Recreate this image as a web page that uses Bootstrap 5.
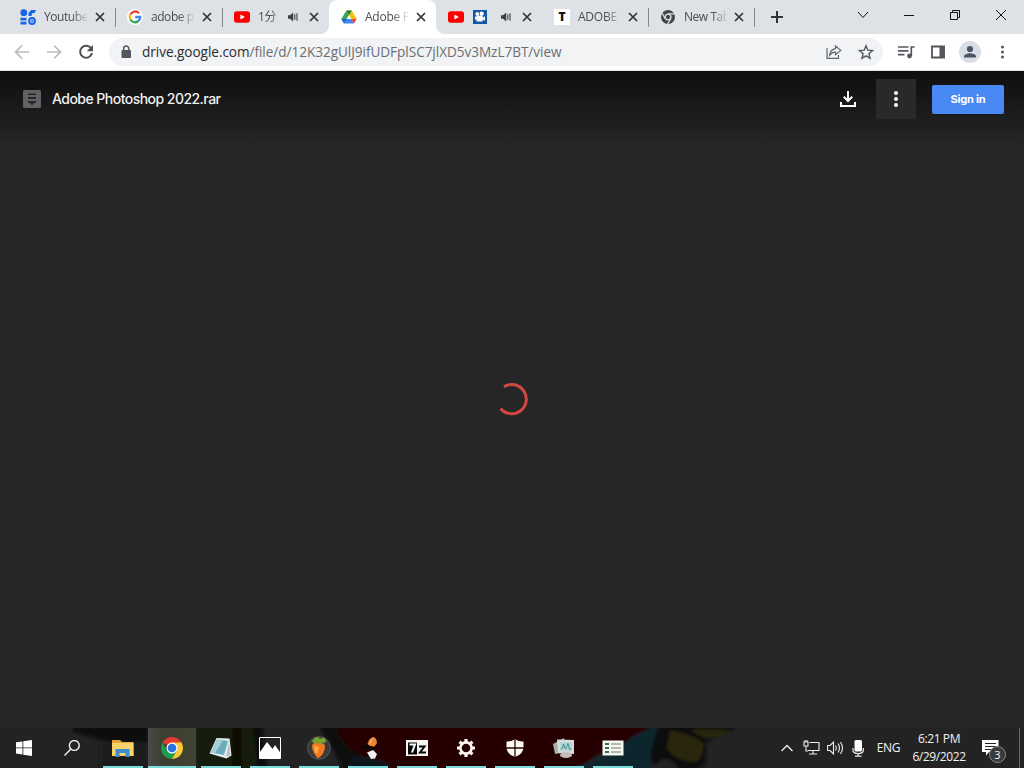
<!DOCTYPE html>
<html lang="en">

<head>
    <meta charset="UTF-8">
    <meta name="viewport" content="width=device-width, initial-scale=1">
    <title>Adobe Photoshop 2022.rar</title>
    <link href="https://cdn.jsdelivr.net/npm/bootstrap@5.3.3/dist/css/bootstrap.min.css" rel="stylesheet">
    <style>
        body { font-family: "Open Sans", "Noto Sans CJK SC", sans-serif; background: #262626; }
        svg { display: block; flex: none; }

        /* tabs */
        .tab-strip { height: 34px; background: #dee1e6; padding-left: 8px; color: #4a4d51; font-size: 12px; }
        .browser-tab { width: 107px; height: 34px; padding: 0 7px 0 12px; position: relative; flex: none; }
        .browser-tab.slim { width: 106px; }
        .browser-tab.sep::after { content: ""; position: absolute; right: -1px; top: 8px; width: 1px; height: 19px; background: #85898e; }
        .browser-tab.current { background: #fff; border-radius: 8px 8px 0 0; }
        .browser-tab.current::before,
        .browser-tab.current::after { content: ""; position: absolute; bottom: 0; width: 8px; height: 8px; }
        .browser-tab.current::before { left: -8px; background: radial-gradient(circle at 0 0, transparent 7.5px, #fff 8px); }
        .browser-tab.current::after { right: -8px; background: radial-gradient(circle at 100% 0, transparent 7.5px, #fff 8px); }
        .tab-title { width: 43px; margin-left: 8px; line-height: 18px; letter-spacing: -.25px; -webkit-mask-image: linear-gradient(to right, #000 65%, rgba(0, 0, 0, .1)); mask-image: linear-gradient(to right, #000 65%, rgba(0, 0, 0, .1)); }
        .tab-title.tight { letter-spacing: -.45px; }
        .tab-title.tiny { width: 19px; -webkit-mask-image: linear-gradient(to right, #000 60%, rgba(0, 0, 0, .5)); mask-image: linear-gradient(to right, #000 60%, rgba(0, 0, 0, .5)); }
        .after-speaker { margin-left: 5px; }
        .new-tab { margin-left: 15px; }
        .favicon-t { width: 16px; height: 16px; background: #fff; color: #111; font: 800 12px/16px "Open Sans", sans-serif; }

        /* toolbar */
        .toolbar { height: 37px; background: #fff; border-bottom: 1px solid #dfe3e3; padding: 0 10px; }
        .omnibox { height: 28px; width: 774px; margin-left: 11px; border-radius: 14px; background: #f1f3f4; padding: 0 9px; }
        .url { font-size: 13.6px; letter-spacing: -.05px; color: #6a6e73; margin-left: 8px; line-height: 20px; }
        .url b { font-weight: 400; color: #2b2d30; }
        .tools { margin-left: 14px; }
        .tools .panel-icon { margin-left: 15px; }
        .tools .profile { margin-left: 13px; }
        .tools .menu-dots { margin-left: 14px; }

        /* file viewer */
        .viewer { height: 657px; background: linear-gradient(#0e0e0e, #171717 28px, #262626 75px); }
        .viewer-bar { height: 56px; padding: 0 20px 0 23px; }
        .file-name { font: 500 14px/20px Inter, sans-serif; letter-spacing: -.53px; color: #f1f1f1; margin-left: 11px; }
        .more-box { width: 40px; height: 40px; background: #292929; margin-left: 19px; }
        .sign-in, .sign-in:hover { width: 72px; height: 29px; border-radius: 2px; background: #4889f4; color: #fff; font: 700 11px/29px Inter, sans-serif; letter-spacing: -.2px; padding: 0; border: 0; }
        .loader { height: 546px; }

        /* taskbar */
        .taskbar { height: 40px; background: #232323; position: relative; color: #f2f2f2; }
        .wallpaper { position: absolute; left: 0; top: 0; }
        .taskbar > div { position: relative; }
        .tb-cell, .app-cell { width: 48px; height: 40px; }
        .app-list { margin-left: 3px; gap: 1px; }
        .app-cell { position: relative; }
        .app-cell::after { content: ""; position: absolute; left: 4px; right: 4px; bottom: 0; height: 2px; background: #7ddbdc; }
        .app-cell.current { background: linear-gradient(to right, #484b48, #3c3f31 30%, #41432f); }
        .app-cell.current::after { left: 0; right: 0; }
        .tray { font-size: 12px; }
        .tray .network { margin-left: 10px; }
        .tray .volume { margin-left: 7px; }
        .tray .mic { margin-left: 8px; }
        .lang { margin-left: 13px; letter-spacing: -.4px; }
        .clock { width: 62px; margin-left: 8px; line-height: 18px; letter-spacing: -.4px; }
        .notes { margin-left: 12px; margin-right: 20px; }
        .note-count { position: absolute; left: 7px; top: 6px; width: 17px; height: 17px; border-radius: 50%; background: #3a3a3a; border: 1px solid #888; font-size: 11px; line-height: 15px; }
        .show-desktop { width: 5px; height: 40px; border-left: 1px solid #666; }
    </style>
</head>

<body class="overflow-hidden">
    <!-- shared icons -->
    <svg width="0" height="0" class="position-absolute">
        <symbol id="close" viewBox="0 0 16 16"><path d="M4 4l8 8M12 4l-8 8" stroke="#303236" stroke-width="1.7" /></symbol>
        <symbol id="youtube" viewBox="0 0 16 16"><rect y="2.2" width="16" height="11.6" rx="2.8" fill="#f00" /><path d="M6.4 5.4v5.2L10.9 8z" fill="#fff" /></symbol>
        <symbol id="speaker" viewBox="0 0 16 16"><path d="M3 6.2h2L8.2 3.5v9L5 9.8H3z" fill="#3c4043" /><path d="M9.800 5.300v5.400M12 4.200v7.600" fill="none" stroke="#3c4043" stroke-width="1.1" /></symbol>
    </svg>

    <!-- tab strip -->
    <div class="tab-strip d-flex align-items-center">
        <div class="browser-tab sep d-flex align-items-center">
            <svg width="16" height="16" viewBox="0 0 16 16" fill="#1766e8"><circle cx="3.8" cy="3.7" r="3.4" /><path d="M8.5 7V4L11 1h5l-1.2 2.8L12 4.5 11.5 7z" /><path d="M.5 8.8h6v2.7h-6zM.5 12.8h6v2.6h-6z" /><circle cx="12" cy="12" r="2.9" fill="none" stroke="#1766e8" stroke-width="2" /><path d="M11.4 10.5l2.400 1.500-2.400 1.500z" /></svg>
            <div class="tab-title tight text-nowrap">Youtube</div>
            <svg class="ms-auto" width="16" height="16"><use href="#close" /></svg>
        </div>
        <div class="browser-tab sep d-flex align-items-center">
            <svg width="16" height="16" viewBox="0 0 16 16"><circle cx="8" cy="8" r="8" fill="#fff" /><g fill="none" stroke-width="2.3"><path d="M12 4.2A5.2 5.2 0 0 0 3.4 5.6" stroke="#ea4335" /><path d="M3.4 5.6a5.2 5.2 0 0 0 0 4.8" stroke="#fbbc05" /><path d="M3.4 10.4a5.2 5.2 0 0 0 8 1.6" stroke="#34a853" /><path d="M11.4 12a5.2 5.2 0 0 0 1.8-4H8.2" stroke="#4285f4" /></g></svg>
            <div class="tab-title tight text-nowrap">adobe p</div>
            <svg class="ms-auto" width="16" height="16"><use href="#close" /></svg>
        </div>
        <div class="browser-tab d-flex align-items-center">
            <svg width="16" height="16"><use href="#youtube" /></svg>
            <div class="tab-title tiny text-nowrap">1分</div>
            <svg class="ms-auto" width="16" height="16"><use href="#speaker" /></svg>
            <svg class="after-speaker" width="16" height="16"><use href="#close" /></svg>
        </div>
        <div class="browser-tab current d-flex align-items-center">
            <svg width="16" height="16" viewBox="0 0 16 16"><path d="M5.3 1.5L.4 10l2.7 4.5L8 6.200z" fill="#34a853" /><path d="M5.300 1.500h5.400L15.600 10h-5.300z" fill="#fbbc04" /><path d="M5.300 1.500h5.400L8 6.200z" fill="#188038" /><path d="M3.1 14.5L5.7 10h4.6l2.6 4.5z" fill="#4285f4" /><path d="M.400 10h5.300l-2.600 4.500z" fill="#1967d2" /><path d="M15.6 10l-2.7 4.5-2.6-4.5z" fill="#ea4335" /><path d="M8 6.2L5.8 10h4.4z" fill="#fff" /></svg>
            <div class="tab-title text-nowrap">Adobe P</div>
            <svg class="ms-auto" width="16" height="16"><use href="#close" /></svg>
        </div>
        <div class="browser-tab slim d-flex align-items-center">
            <svg width="16" height="16"><use href="#youtube" /></svg>
            <svg class="ms-2" width="16" height="16" viewBox="0 0 16 16"><path d="M1 1h14v14H1z" fill="#1259a5" /><g fill="#fff"><circle cx="5.3" cy="4.9" r="1.9" /><circle cx="9.7" cy="4.7" r="2.1" /><path d="M4.500 6.500h6.200v2L13 7.200v4.600l-2.300-1.300v2H4.500V10L3 11V7.200l1.500.8z" /></g></svg>
            <svg class="ms-auto" width="16" height="16"><use href="#speaker" /></svg>
            <svg class="after-speaker" width="16" height="16"><use href="#close" /></svg>
        </div>
        <div class="browser-tab slim sep d-flex align-items-center">
            <div class="favicon-t text-center">T</div>
            <div class="tab-title text-nowrap">ADOBE</div>
            <svg class="ms-auto" width="16" height="16"><use href="#close" /></svg>
        </div>
        <div class="browser-tab slim sep d-flex align-items-center">
            <svg width="16" height="16" viewBox="0 0 16 16"><circle cx="8" cy="8" r="7" fill="#42464b" /><circle cx="8" cy="8" r="2.9" fill="#42464b" stroke="#dee1e6" stroke-width="1.4" /><path d="M8 4.8h6.5M5.2 9.6L2 4M10.8 9.6L7.5 15" stroke="#dee1e6" stroke-width="1.2" /></svg>
            <div class="tab-title tight text-nowrap">New Tab</div>
            <svg class="ms-auto" width="16" height="16"><use href="#close" /></svg>
        </div>
        <svg class="new-tab" width="16" height="16" viewBox="0 0 16 16"><path d="M8 2v12M2 8h12" stroke="#303236" stroke-width="2" /></svg>
        <!-- window controls -->
        <svg class="ms-auto mb-1" width="168" height="20" viewBox="0 0 168 20" fill="none" stroke="#111"><path d="M2 7l5 5.500L12 7" /><path d="M48 10.500h10M94.500 7.500h7v7h-7zM96.500 7.500v-2h7v7h-2M140 5l10 10M150 5l-10 10" /></svg>
    </div>

    <!-- toolbar -->
    <div class="toolbar d-flex align-items-center">
        <svg width="88" height="24" viewBox="0 0 88 24" fill="none"><path d="M19 12H6M12 5.500L5.500 12l6.500 6.500M37 12h13M44 5.500l6.500 6.500-6.500 6.500" stroke="#b8babd" stroke-width="1.700" /><path d="M81 8.200A6 6 0 1 0 82 13" stroke="#4d5156" stroke-width="2" /><path d="M83 5v6.300h-6.300z" fill="#4d5156" /></svg>
        <div class="omnibox d-flex align-items-center">
            <svg width="16" height="16" viewBox="0 0 16 16"><rect x="3.500" y="6" width="9.500" height="8" rx="1" fill="#54575c" /><path d="M5.700 6.500V4.600a2.500 2.500 0 0 1 5 0v1.900" fill="none" stroke="#54575c" stroke-width="1.500" /></svg>
            <div class="url text-nowrap"><b>drive.google.com</b>/file/d/12K32gUlJ9ifUDFplSC7jlXD5v3MzL7BT/view</div>
            <svg class="ms-auto" width="16" height="16" viewBox="0 0 16 16" fill="none" stroke="#63666b" stroke-width="1.200"><path d="M1 4v10.400h11.500V11" /><path d="M9.500 2l5.300 4.400-5.300 4.200V8.200Q6 8 3.500 11.300 4.200 5.500 9.500 4.700z" /></svg>
            <svg class="ms-3" width="16" height="16" viewBox="0 0 16 16" fill="none" stroke="#54575c" stroke-width="1.400"><path d="M8 1.800l1.800 4.400 4.700.4-3.600 3.100 1.100 4.600L8 11.800l-4 2.500 1.100-4.600-3.600-3.100 4.700-.4z" /></svg>
        </div>
        <div class="tools d-flex align-items-center">
            <svg width="18" height="16" viewBox="0 0 18 16" fill="none" stroke="#54575c" stroke-width="1.700"><path d="M1 3h10.500M1 6.800h10.500M1 10.600h6.500M17.500 3h-3.200v9" /><circle cx="12.500" cy="12" r="2.400" fill="#54575c" stroke="none" /></svg>
            <svg class="panel-icon" width="16" height="16" viewBox="0 0 16 16"><path d="M2 2.500h12v11H2z" fill="none" stroke="#54575c" stroke-width="1.800" /><path d="M9.500 2h5v12h-5z" fill="#54575c" /></svg>
            <svg class="profile" width="22" height="22" viewBox="0 0 22 22"><circle cx="11" cy="11" r="11" fill="#d9dee5" /><circle cx="11" cy="8" r="3.100" fill="#4b5566" /><path d="M5 16.500v-1.300c0-2 4-3 6-3s6 1 6 3v1.300z" fill="#4b5566" /></svg>
            <svg class="menu-dots" width="16" height="16" viewBox="0 0 16 16" fill="#54575c"><circle cx="7.500" cy="3" r="1.500" /><circle cx="7.500" cy="8" r="1.500" /><circle cx="7.500" cy="13" r="1.500" /></svg>
        </div>
    </div>

    <!-- file viewer -->
    <main class="viewer">
        <div class="viewer-bar d-flex align-items-center">
            <svg width="18" height="18" viewBox="0 0 18 18"><rect width="18" height="18" rx="1.500" fill="#616266" /><path d="M5 3.500h8v1.500H5zM5 7h8v2H5zM5 11h8v1.500l-2.500 1L9 15.500l-1.500-2-2.500-1z" fill="#28282a" /></svg>
            <div class="file-name text-nowrap">Adobe Photoshop 2022.rar</div>
            <svg class="ms-auto" width="18" height="18" viewBox="0 0 18 18" fill="none" stroke="#fff" stroke-width="2"><path d="M9 1v9.500M4.800 6.800L9 11l4.200-4.200M2 12v4h14v-4" /></svg>
            <div class="more-box d-flex align-items-center justify-content-center">
                <svg width="16" height="18" viewBox="0 0 16 18" fill="#fff"><circle cx="8" cy="3" r="2" /><circle cx="8" cy="9" r="2" /><circle cx="8" cy="15" r="2" /></svg>
            </div>
            <button class="sign-in btn ms-3">Sign in</button>
        </div>
        <div class="loader d-flex align-items-center justify-content-center">
            <svg width="32" height="34" viewBox="0 0 32 34"><path d="M8 3.700A14.600 14.600 0 1 1 4.500 25.500" fill="none" stroke="#d14841" stroke-width="3" /></svg>
        </div>
    </main>

    <!-- taskbar -->
    <footer class="taskbar d-flex align-items-center">
        <!-- desktop picture showing through -->
        <svg class="wallpaper" width="1024" height="40" viewBox="0 0 1024 40">
            <defs><filter id="soft" x="0" y="0" width="1" height="1"><feGaussianBlur stdDeviation="1.8" /></filter></defs>
            <g filter="url(#soft)">
                <path d="M72 -4h76v20q-30 1-50-5T72 3z" fill="#080808" />
                <path d="M100 14h48v30h-48z" fill="#1a1a1a" />
                <path d="M196 -4h58l8 48h-66z" fill="#151b07" />
                <path d="M232 -4h10v48h-10z" fill="#0b0f05" />
                <path d="M252 -4h10l6 48h-10z" fill="#101010" />
                <path d="M326 -4h326q-10 14-38 22-22 10-40 26H345z" fill="#260604" />
                <path d="M318 -4h18q4 22 24 30l24 18h-40l-10-22z" fill="#0b0b0b" />
                <path d="M346 44l6-16q20 0 36 8l6 8z" fill="#08191e" />
                <path d="M574 44l4-6q32-10 50-26 12-8 28-14l6 16q-6 12-16 30z" fill="#0b252d" />
                <path d="M660 -4h76q-4 10-20 13-6 4-10 4v22l-10 9h-32l-14-12q2-20 10-36z" fill="#0f0f0c" />
                <path d="M670 3q20 2 34 13-2 16-10 18-20-2-27-14z" fill="#2c270b" />
                <path d="M690 2h42q-12 9-28 8z" fill="#28260f" />
                <path d="M654 44q2-12 12-13 8 1 14 13z" fill="#242424" />
            </g>
        </svg>
        <div class="d-flex">
            <div class="tb-cell d-flex align-items-center justify-content-center">
                <svg width="16" height="16" viewBox="0 0 16 16" fill="#fff"><path d="M0 2.300l6.500-.9v6.100H0zM7.300 1.300L16 0v7.500H7.300zM0 8.300h6.500v6.200L0 13.600zM7.300 8.300H16V16l-8.700-1.300z" /></svg>
            </div>
            <div class="tb-cell d-flex align-items-center justify-content-center">
                <svg width="16" height="16" viewBox="0 0 16 16" fill="none" stroke="#f4f4f4" stroke-width="1.400"><circle cx="10.300" cy="5.500" r="4.900" /><path d="M6.800 9L.5 15.500" /></svg>
            </div>
        </div>
        <div class="app-list d-flex">
            <div class="app-cell d-flex align-items-center justify-content-center">
                <svg width="22" height="20" viewBox="0 0 22 20"><path d="M0 2h8l2 2h11.500v14H0z" fill="#e2a93a" /><path d="M0 5h21.500v13H0z" fill="#fbd368" /><path d="M3.500 19v-8h14v8h-4v-4h-6v4z" fill="#3e8ecb" /></svg>
            </div>
            <div class="app-cell current d-flex align-items-center justify-content-center">
                <svg width="24" height="24" viewBox="0 0 24 24"><path d="M12 12L2.480 6.500A11 11 0 0 1 21.520 6.500z" fill="#e33b2e" /><path d="M12 12V6.500h9.520A11 11 0 0 1 12 23z" fill="#fcc934" /><path d="M2.480 6.500A11 11 0 0 0 12 23l4.800-8.300L12 12 7.240 14.700z" fill="#1e9b4d" /><circle cx="12" cy="12" r="5.500" fill="#fff" /><circle cx="12" cy="12" r="4.300" fill="#2673e8" /></svg>
            </div>
            <div class="app-cell d-flex align-items-center justify-content-center">
                <svg width="24" height="24" viewBox="0 0 24 24"><path d="M7.500 2l13 .500 2 17-5 3L.500 17.500z" fill="#e2ebec" /><path d="M8 3.500L19 5l-4 14L2 16.500z" fill="#6bacba" /><path d="M8 3.500l6 1L6 17.300l-4-.800z" fill="#a3d0d6" /><path d="M20 6l1 13-3.500 2z" fill="#b5b9bb" /></svg>
            </div>
            <div class="app-cell d-flex align-items-center justify-content-center">
                <svg width="22" height="22" viewBox="0 0 22 22"><path d="M.5.500h21v21H.5z" fill="none" stroke="#fff" /><path d="M1 15L8 5l5.500 7L16 8l5.500 8v5.500H1z" fill="#fff" /></svg>
            </div>
            <div class="app-cell d-flex align-items-center justify-content-center">
                <svg width="24" height="24" viewBox="0 0 24 24"><circle cx="12" cy="12" r="11.300" fill="#383a3b" stroke="#555b5d" /><path d="M5 10q0-3.500 6-3.500 7.500 0 7 4.500-1 8-7 11.500Q5.500 17 5 10z" fill="#f47722" /><path d="M7.500 10l4.500 1-2 7q-3.500-4-2.500-8z" fill="#ffb13c" /><path d="M5 5.500Q7 1 11 1l2 2 4-1.500q3 2 1 5.500l-3-.5-2 2.500-2-3-3 2z" fill="#77a530" /></svg>
            </div>
            <div class="app-cell d-flex align-items-center justify-content-center">
                <svg width="30" height="24" viewBox="0 0 30 24"><path d="M14.500 8Q16 2 20.500 1q3 1 3.500 6l-2.500 3.500-4.500-.5z" fill="#e98737" /><path d="M20 2.500q-2.500 2-3 5" stroke="#ffc27f" fill="none" /><path d="M8 11h7l5 3" stroke="#080808" stroke-width="2.500" fill="none" /><path d="M14 16.500l6-2.500 4 4-2 4.500-4 .5z" fill="#f1eeee" /></svg>
            </div>
            <div class="app-cell d-flex align-items-center justify-content-center">
                <svg width="22" height="16" viewBox="0 0 22 16"><path d="M0 0h22v16H0z" fill="#f6f6f0" /><path d="M2 2.500h9v12H2z" fill="#080808" /><path d="M3.500 4.500h5.500L6 12.500" fill="none" stroke="#fff" stroke-width="2" /><path d="M13 6.500h5.500l-4.500 6h6" fill="none" stroke="#080808" stroke-width="2" /></svg>
            </div>
            <div class="app-cell d-flex align-items-center justify-content-center">
                <svg width="20" height="20" viewBox="0 0 20 20" fill="none" stroke="#fff5f2"><circle cx="10" cy="10" r="5.600" stroke-width="2.600" /><path d="M10 1v3M10 16v3M1 10h3M16 10h3M3.600 3.600l2.200 2.200M14.200 14.200l2.200 2.200M16.400 3.600l-2.200 2.200M5.800 14.200l-2.200 2.200" stroke-width="3.200" /></svg>
            </div>
            <div class="app-cell d-flex align-items-center justify-content-center">
                <svg width="18" height="18" viewBox="0 0 18 18"><path d="M9 0q4 3 8.500 2.500V8q0 7-8.500 10Q.5 15 .5 8V2.500Q5 3 9 0z" fill="#fffdf4" /><path d="M9 0v18M0 9h18" stroke="#260604" stroke-width="1.300" /></svg>
            </div>
            <div class="app-cell d-flex align-items-center justify-content-center">
                <svg width="24" height="22" viewBox="0 0 24 22"><path d="M1 7l11-6 3 14-12 2z" fill="#a4b0ae" /><path d="M5 2.500l17 .5v14L6 16z" fill="#d5dedd" /><path d="M8 5l12 .5v9L8.500 14z" fill="#b7d4d4" /><path d="M8.500 12l2-1 1-4 2 5 2.500-5.500 1.500 6 2-1" fill="none" stroke="#3e8992" /><ellipse cx="14" cy="18" rx="6" ry="3" fill="#c9bcbc" /></svg>
            </div>
            <div class="app-cell d-flex align-items-center justify-content-center">
                <svg width="22" height="16" viewBox="0 0 22 16"><path d="M.5.500h21v15H.5z" fill="#f6f8ef" /><path d="M3 4h4M3 8h4M3 12h4" stroke="#2c7157" stroke-width="2" /><path d="M9 4h10M9 8h10M9 12h10" stroke="#6d7b70" /></svg>
            </div>
        </div>
        <div class="tray d-flex align-items-center ms-auto">
            <svg width="12" height="8" viewBox="0 0 12 8" fill="none" stroke="#eee" stroke-width="1.300"><path d="M.5 7L6 1.500 11.500 7" /></svg>
            <svg class="network" width="17" height="16" viewBox="0 0 17 16" fill="none" stroke="#eee" stroke-width="1.100"><path d="M6.500 2.500h9.500v8H5M10 10.500v3.500M6 14h8M1 2h4v4H1zM3 6v5h2M2 2V0M4 2V0" /></svg>
            <svg class="volume" width="17" height="16" viewBox="0 0 17 16" fill="none" stroke="#eee" stroke-width="1.100"><path d="M.600 5.500h2.500L6.500 2v12L3.100 10.500H.600zM8.500 5.500q1.600 2.500 0 5M11 3.500q3 4.500 0 9M13.500 2q4 6 0 12" /></svg>
            <svg class="mic" width="12" height="17" viewBox="0 0 12 17"><rect x="2.500" width="7.500" height="11.500" rx="1.500" fill="#fff" /><path d="M1 8v3q1 2.500 5.200 2.500T11.300 11V8M6.200 13.500V16M3 16.200h6.500" fill="none" stroke="#eee" stroke-width="1.200" /></svg>
            <div class="lang">ENG</div>
            <div class="clock text-center">6:21 PM<br>6/29/2022</div>
            <div class="notes position-relative">
                <svg width="17" height="17" viewBox="0 0 17 17"><path d="M0 0h16.500v12H7l-3 3.500V12H0z" fill="#fff" /><path d="M3 3.500h11M3 6.500h11M3 9.500h7" stroke="#232323" /></svg>
                <div class="note-count text-center">3</div>
            </div>
            <div class="show-desktop"></div>
        </div>
    </footer>

    <script src="https://cdn.jsdelivr.net/npm/bootstrap@5.3.3/dist/js/bootstrap.bundle.min.js"></script>
</body>

</html>
